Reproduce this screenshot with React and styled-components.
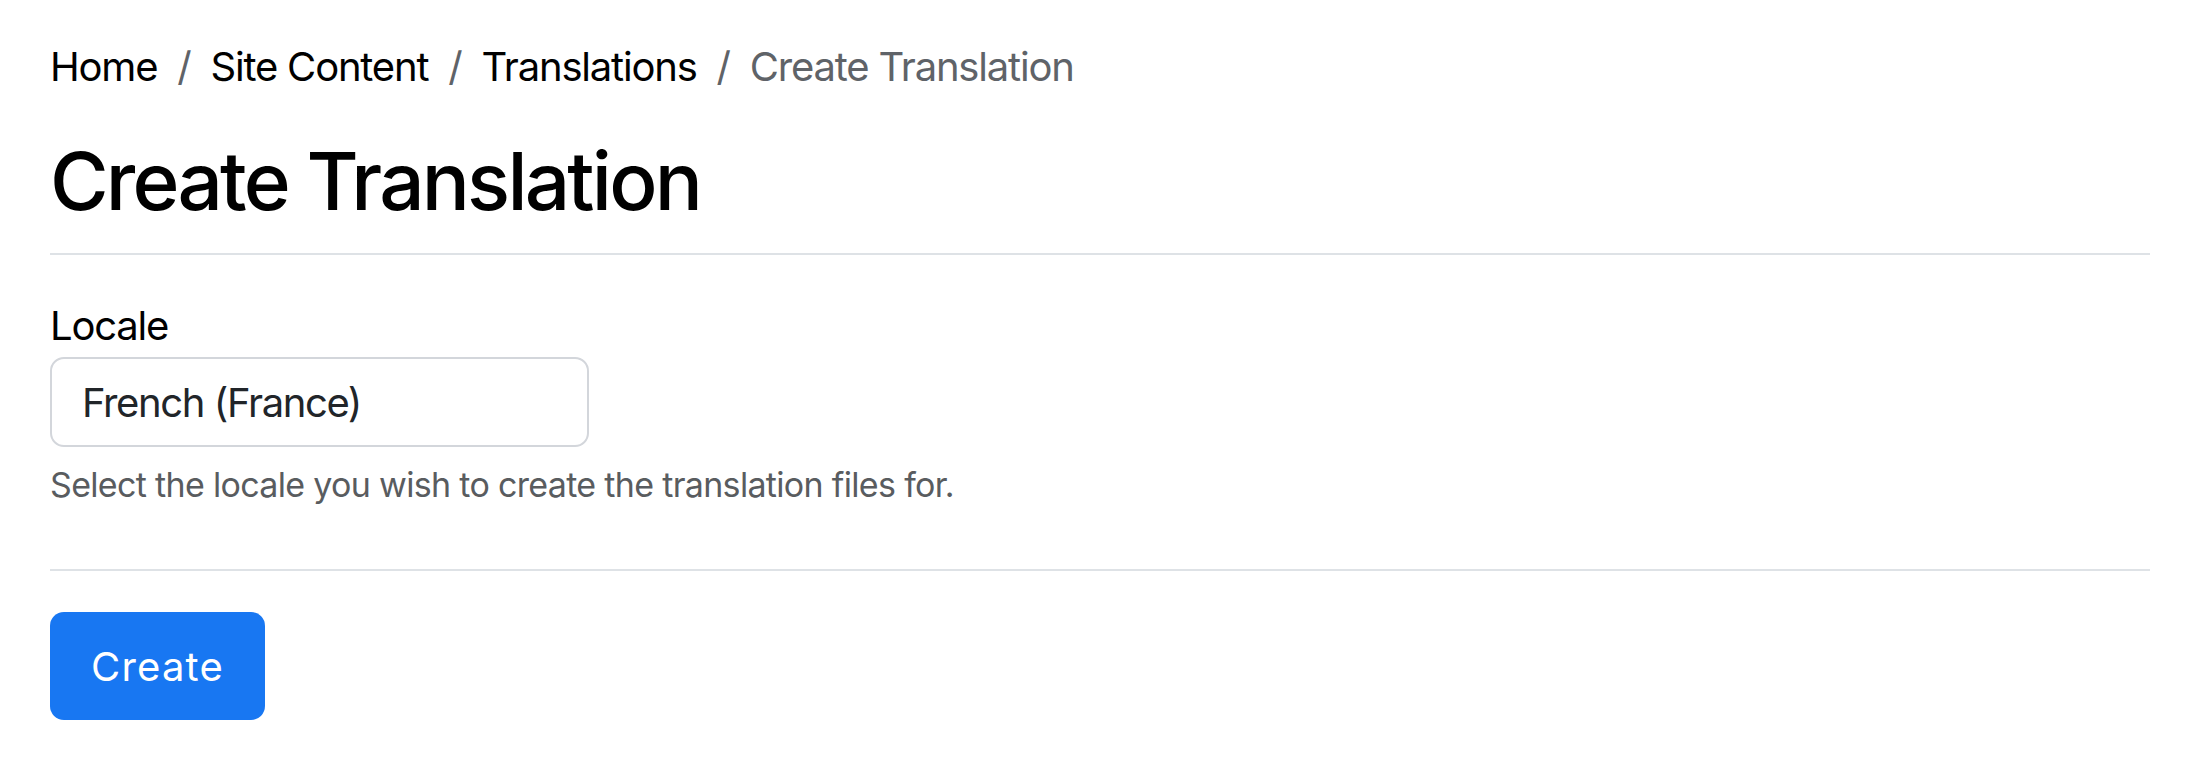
import React from "react";
import styled, { createGlobalStyle } from "styled-components";

const GlobalStyle = createGlobalStyle`
  body {
    margin: 0;
    background: #FFFFFF;
    font-family: Inter, 'Noto Sans', sans-serif;
    color: #000000;
  }
`;

const Page = styled.div`
  padding: 37px 40px 0 50px;
`;

const Breadcrumb = styled.nav`
  display: flex;
  align-items: center;
  font-size: 40px;
  line-height: 60px;
  letter-spacing: -0.03em;
`;

const Crumb = styled.span`
  color: ${(props) => (props.active ? '#5F6368' : '#000000')};
`;

const Divider = styled.span`
  color: #5F6368;
  padding: 0 20px;
`;

const Title = styled.h1`
  margin: 36px 0 24px;
  font-size: 80px;
  font-weight: 500;
  line-height: 96px;
  letter-spacing: -0.035em;
`;

const Rule = styled.hr`
  margin: 0;
  border: 0;
  border-top: 2px solid #DEE2E6;
`;

const Field = styled.div`
  display: flex;
  flex-direction: column;
  align-items: flex-start;
  padding: 41px 0 59px;
`;

const Label = styled.label`
  font-size: 40px;
  line-height: 60px;
  letter-spacing: -0.03em;
  margin-bottom: 1px;
`;

const Input = styled.div`
  box-sizing: border-box;
  width: 539px;
  height: 90px;
  padding: 0 30px;
  display: flex;
  align-items: center;
  border: 2px solid #D3D6DB;
  border-radius: 14px;
  font-size: 40px;
  letter-spacing: -0.035em;
  color: #212529;
`;

const HelpText = styled.div`
  margin-top: 12px;
  font-size: 34px;
  line-height: 51px;
  letter-spacing: -0.02em;
  color: #595C5F;
`;

const Actions = styled.div`
  padding-top: 41px;
`;

const Button = styled.button`
  box-sizing: border-box;
  width: 215px;
  height: 108px;
  border: 0;
  border-radius: 14px;
  background: #1877F2;
  color: #FFFFFF;
  font-family: inherit;
  font-size: 40px;
  letter-spacing: 0.03em;
  cursor: pointer;
`;

export default function App() {
    return (
        <>
            <GlobalStyle/>
            <Page>
                <Breadcrumb>
                    <Crumb>Home</Crumb>
                    <Divider>/</Divider>
                    <Crumb>Site Content</Crumb>
                    <Divider>/</Divider>
                    <Crumb>Translations</Crumb>
                    <Divider>/</Divider>
                    <Crumb active>Create Translation</Crumb>
                </Breadcrumb>
                <Title>Create Translation</Title>
                <Rule/>
                <Field>
                    <Label>Locale</Label>
                    <Input>French (France)</Input>
                    <HelpText>Select the locale you wish to create the translation files for.</HelpText>
                </Field>
                <Rule/>
                <Actions>
                    <Button>Create</Button>
                </Actions>
            </Page>
        </>
    );
}
